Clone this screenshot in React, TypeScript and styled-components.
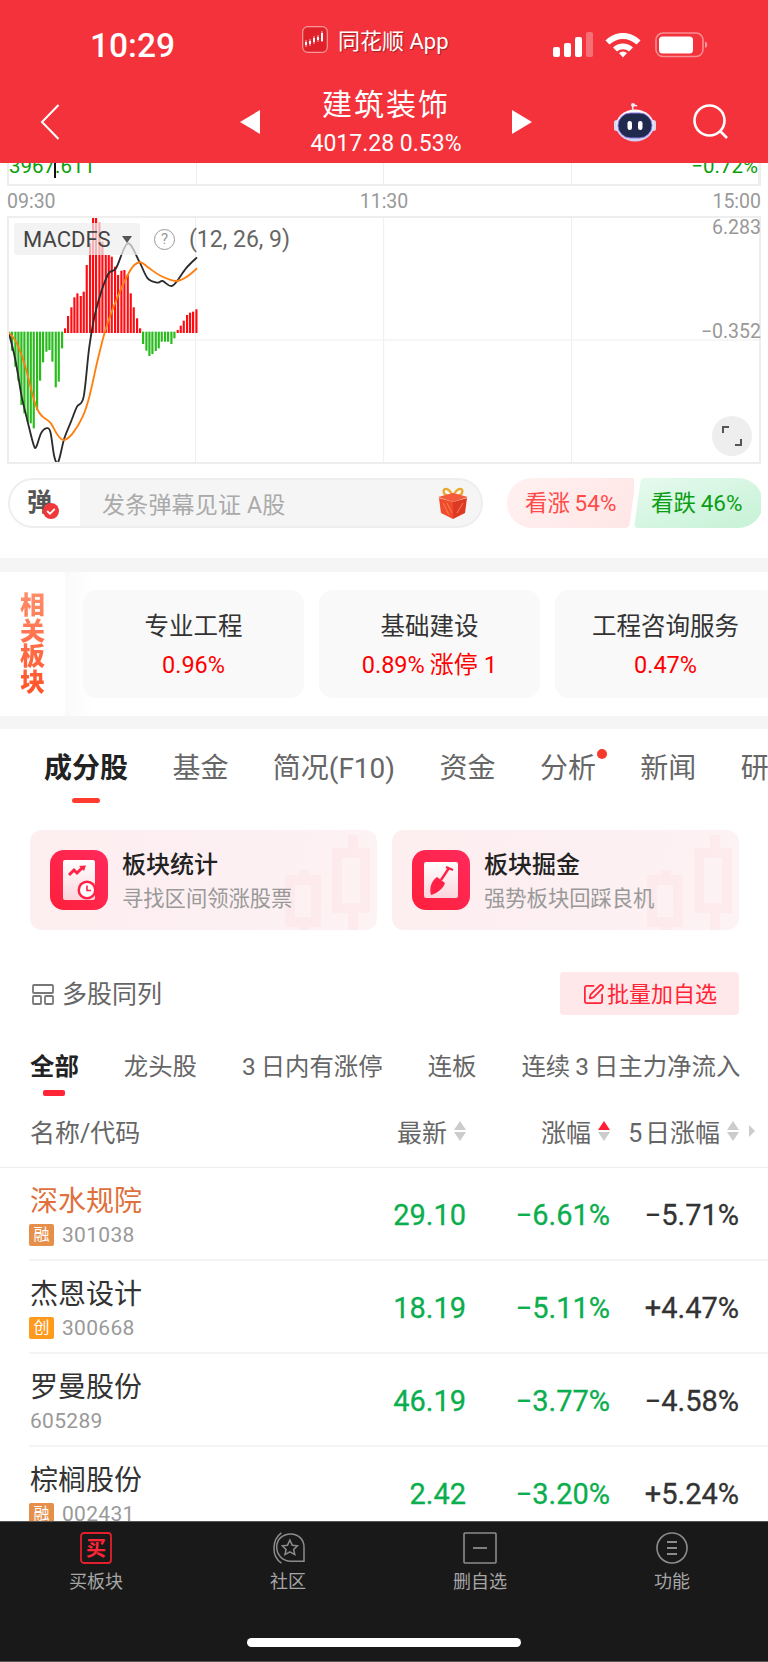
import React from "react";
import styled, { createGlobalStyle } from "styled-components";
import { SquarePen } from "lucide-react";

const FONT = `Roboto, "Noto Sans CJK SC", sans-serif`;

const Global = createGlobalStyle`
  html, body { margin: 0; padding: 0; background: #fff; }
  * { box-sizing: border-box; }
  body { font-family: ${FONT}; }
`;

const Page = styled.div`
  width: 768px; height: 1662px; display: flex; flex-direction: column;
  overflow: hidden; background: #fff; font-family: ${FONT};
`;
const Header = styled.header`
  flex: 0 0 163px; background: #f4323b; color: #fff; padding-top: 24px; position: relative; z-index: 1;
`;
const StatusRow = styled.div`
  height: 38px; display: grid; grid-template-columns: 302px 251px 1fr; align-items: center;
`;
const Time = styled.div`
  padding-left: 90px; font: 500 33.5px/38px Roboto, sans-serif; position: relative; top: 3px;
`;
const CarrierApp = styled.div`
  display: flex; align-items: center; gap: 10px; font-size: 22px; text-shadow: 1px 1px 1px rgba(0,0,0,.35);
  position: relative; top: -4px;
`;
const StatusIcons = styled.div`
  display: flex; align-items: center; position: relative; top: 2px;
`;
const NavRow = styled.div`
  margin-top: 24px; height: 71px; display: flex; align-items: center; padding-left: 40px;
`;
const NavTitle = styled.div`
  width: 252px; text-align: center; display: flex; flex-direction: column; align-items: center; margin-top: 2px;
`;
const Title = styled.div`
  font-size: 30px; line-height: 36px; letter-spacing: 2px; height: 36px;
`;
const SubTitle = styled.div`
  margin-top: 7px; font-size: 23px; line-height: 28px; height: 28px;
`;
const Spacer = styled.div<{ $w: number }>`
  flex: 0 0 ${(p) => p.$w}px;
`;
const Triangle = styled.div<{ $right?: boolean }>`
  width: 0; height: 0; border-top: 12px solid transparent; border-bottom: 12px solid transparent;
  ${(p) => (p.$right ? "border-left: 20px solid #fff;" : "border-right: 20px solid #fff;")}
`;
const Content = styled.main`
  flex: 1 1 0; min-height: 0; overflow: hidden;
`;
const ChartArea = styled.section`
  padding: 0 7px;
`;
const PriceChart = styled.div`
  position: relative; height: 23px; border-left: 2px solid #eee; border-right: 2px solid #eee;
  border-bottom: 2px solid #eee; display: grid; grid-template-columns: repeat(4, 1fr);
  overflow: hidden;
`;
const GridCell = styled.div`
  border-right: 1px solid #eee; &:last-child { border-right: none; }
`;
const PriceTag = styled.div<{ $right?: boolean }>`
  position: absolute; bottom: 8px; color: #0a9f0a; font-size: 20.5px; line-height: 20px;
  ${(p) => (p.$right ? "right: 1px;" : "left: 0;")}
`;
const Cursor = styled.div`
  position: absolute; left: 45px; top: 0; width: 2px; height: 15px; background: #111;
`;
const TimeAxis = styled.div`
  height: 30px; display: flex; justify-content: space-between; align-items: center;
  color: #999; font-size: 19.5px;
`;
const MacdBox = styled.div`
  position: relative; height: 248px; border: 2px solid #eee;
`;
const MacdSvg = styled.svg`
  display: block; width: 750px; height: 244px;
`;
const MacdPill = styled.div`
  position: absolute; left: 5px; top: 5px; width: 126px; height: 32px; background: rgba(238,238,238,.72);
  border-radius: 3px; padding-left: 9px; color: #444; font-size: 22px; line-height: 33px;
`;
const PillCaret = styled.span`
  position: absolute; left: 108px; top: 13px; width: 0; height: 0;
  border-left: 5.5px solid transparent; border-right: 5.5px solid transparent; border-top: 7px solid #555;
`;
const Help = styled.div`
  position: absolute; left: 145px; top: 11px; width: 21px; height: 21px; border: 1.5px solid #999; border-radius: 50%;
  color: #999; font-size: 15px; line-height: 18px; text-align: center;
`;
const Params = styled.div`
  position: absolute; left: 180px; top: 8px; color: #666; font-size: 23px; line-height: 28px; white-space: nowrap;
`;
const AxisValue = styled.div<{ $top: number }>`
  position: absolute; right: -2px; top: ${(p) => p.$top}px; color: #999; font-size: 19.5px; line-height: 20px;
`;
const Expand = styled.div`
  position: absolute; left: 703px; top: 198px; width: 40px; height: 40px; border-radius: 50%;
  background: #eee; display: flex; align-items: center; justify-content: center;
`;
const ActionRow = styled.section`
  padding: 14px 7px 30px 8px; display: flex; justify-content: space-between;
`;
const Danmu = styled.div`
  width: 475px; height: 50px; border: 2px solid #eee; border-radius: 25px; overflow: hidden;
  display: flex; align-items: center; background: #f5f5f5; position: relative;
`;
const DanmuBadge = styled.div`
  flex: 0 0 70px; height: 100%; background: #fff; position: relative; padding: 5px 0 0 17px;
  font-size: 25px; line-height: 36px; font-weight: 700; color: #555;
`;
const BadgeCheck = styled.svg`
  position: absolute; left: 33px; top: 23px; width: 16px; height: 16px;
`;
const DanmuText = styled.div`
  margin-left: 22px; color: #aaa; font-size: 23px; flex: 1; letter-spacing: .2px;
`;
const Gift = styled.svg`
  width: 32px; height: 34px; margin-right: 12px;
`;
const Vote = styled.div`
  display: flex; width: 254px; height: 50px; justify-content: space-between;
`;
const VoteUp = styled.div`
  width: 129px; height: 50px; color: #ff4a4a; font-size: 22.5px; line-height: 50px; padding-left: 18px;
  background: linear-gradient(135deg, #fff1f0, #ffe6e6); white-space: nowrap;
  clip-path: path("M25 0 H125 Q129 0 128.4 4 L122.6 46 Q122 50 118 50 H25 A25 25 0 0 1 25 0 Z");
`;
const VoteDown = styled.div`
  width: 129px; height: 50px; color: #0b9e14; font-size: 22.5px; line-height: 50px; padding-left: 17px;
  background: linear-gradient(160deg, #e6faee, #c6f2d6); white-space: nowrap;
  clip-path: path("M104 0 A25 25 0 0 1 104 50 H4 Q0 50 .6 46 L6.4 4 Q7 0 11 0 Z");
`;
const Band = styled.div<{ $h: number }>`
  height: ${(p) => p.$h}px; background: #f5f5f5;
`;
const SectorRow = styled.section`
  height: 144px; display: flex; overflow: hidden;
  background: linear-gradient(90deg, #fff 65px, #fafafa 65px, #fff 95px);
`;
const SectorLabel = styled.div`
  flex: 0 0 65px; padding: 21px 0 0 20px; font-size: 25px; line-height: 25.5px; font-weight: 900; width: 65px;
  background: linear-gradient(180deg, #ff9a78, #ff4d22); -webkit-background-clip: text; background-clip: text;
  color: transparent; height: 130px;
`;
const SectorCards = styled.div`
  display: flex; gap: 15px; padding: 18px 0 0 18px;
`;
const SectorCard = styled.div`
  flex: 0 0 221px; height: 108px; background: #f9f9f9; border-radius: 14px; text-align: center; padding-top: 19px;
`;
const SectorName = styled.div`
  color: #333; font-size: 24.5px; line-height: 36px; white-space: nowrap;
`;
const SectorPct = styled.div`
  color: #f00; font-size: 23.5px; line-height: 34px; margin-top: 3px; white-space: nowrap;
  span { font-size: 24px; margin-left: 5px; }
`;
const Tabs = styled.nav`
  height: 101px; padding: 24px 0 0 44px; display: flex; gap: 44.4px; white-space: nowrap; overflow: hidden;
`;
const Tab = styled.div<{ $active?: boolean }>`
  position: relative; font-size: 28px; line-height: 32px; height: 32px; flex: none;
  color: ${(p) => (p.$active ? "#222" : "#666")}; font-weight: ${(p) => (p.$active ? 700 : 400)};
  ${(p) => p.$active && `&::after { content: ""; position: absolute; left: 28px; top: 45px; width: 28px; height: 5px; border-radius: 3px; background: #ff3b30; }`}
`;
const Dot = styled.span`
  position: absolute; right: -11px; top: -4px; width: 10px; height: 10px; border-radius: 50%; background: #f6392c;
`;
const Promos = styled.section`
  display: flex; gap: 15px; padding: 0 29px 0 30px;
`;
const Promo = styled.div`
  position: relative; overflow: hidden; flex: 0 0 347px; height: 100px; border-radius: 12px;
  background: linear-gradient(100deg, #fdeef0, #fdf0f2 60%, #fdf2f4);
  display: flex; align-items: center; padding-left: 20px; gap: 14px;
`;
const PromoIcon = styled.svg`
  flex: 0 0 58px; width: 58px; height: 60px;
`;
const PromoWater = styled.svg`
  position: absolute; right: 0; top: 0; width: 120px; height: 100px;
`;
const PromoText = styled.div`
  position: relative; display: flex; flex-direction: column; padding-top: 3px;
`;
const PromoTitle = styled.div`
  font-size: 24px; line-height: 34px; font-weight: 500; color: #222;
`;
const PromoSub = styled.div`
  font-size: 21.3px; line-height: 34px; color: #999;
`;
const ToolRow = styled.section`
  margin-top: 42px; height: 43px; padding: 0 29px 0 32px; display: flex; align-items: center; justify-content: space-between;
`;
const ToolLeft = styled.div`
  display: flex; align-items: center; gap: 8px; color: #666; font-size: 25px; padding-bottom: 3px;
  svg { position: relative; top: 2px; }
`;
const BatchButton = styled.div`
  width: 179px; height: 43px; background: #ffe8e9; border-radius: 4px; color: #ff2436; font-size: 22px;
  display: flex; align-items: center; justify-content: center; gap: 2px; padding-bottom: 3px;
  svg { position: relative; top: 2px; }
`;
const SubTabs = styled.nav`
  height: 81px; padding: 36px 0 0 30px; display: flex; gap: 45px; white-space: nowrap; overflow: hidden;
`;
const SubTab = styled.div<{ $active?: boolean }>`
  position: relative; font-size: 24.4px; line-height: 32px; height: 32px; flex: none;
  color: ${(p) => (p.$active ? "#222" : "#666")}; font-weight: ${(p) => (p.$active ? 700 : 400)};
  ${(p) => p.$active && `&::after { content: ""; position: absolute; left: 13px; top: 39px; width: 22px; height: 6px; border-radius: 2px; background: #ff2436; }`}
`;
const TableHead = styled.div`
  height: 72px; border-bottom: 1px solid #eee; padding: 0 0 1px 30px;
  display: grid; grid-template-columns: 1fr 100px 144px 129px 29px; align-items: center;
  color: #666; font-size: 25px;
`;
const HeadCell = styled.div`
  display: flex; justify-content: flex-end; align-items: center; gap: 6px; white-space: nowrap;
`;
const Sort = styled.span`
  display: inline-flex; flex-direction: column; gap: 2px; width: 13px; align-items: center;
`;
const SortArrow = styled.i<{ $down?: boolean; $on?: boolean }>`
  display: block; width: 0; height: 0; border-left: 6px solid transparent; border-right: 6px solid transparent;
  ${(p) => (p.$down ? "border-top" : "border-bottom")}: 9px solid ${(p) => (p.$on ? "#ff1f35" : "#ccc")};
`;
const MoreCaret = styled.span`
  justify-self: start; margin-left: 10px; width: 0; height: 0;
  border-top: 6px solid transparent; border-bottom: 6px solid transparent; border-left: 6px solid #ccc;
`;
const Row = styled.div`
  height: 93px; margin-left: 29px; border-bottom: 2px solid #f4f4f4; padding-left: 1px;
  display: grid; grid-template-columns: 1fr 100px 144px 129px 29px; align-items: center;
`;
const NameCell = styled.div`
  align-self: start; padding-top: 17px; margin-left: -1px;
`;
const StockName = styled.div<{ $hot?: boolean }>`
  font-size: 28px; line-height: 34px; color: ${(p) => (p.$hot ? "#e0703c" : "#333")};
  margin-left: 1px;
`;
const CodeLine = styled.div`
  margin-top: 4px; height: 24px; display: flex; align-items: center; gap: 8px; color: #999; font-size: 21px;
  letter-spacing: .3px; padding-left: 0;
`;
const Mark = styled.span<{ $c: string }>`
  width: 25px; height: 22px; background: ${(p) => p.$c}; color: #fff; border-radius: 2px; font-size: 16px;
  line-height: 22px; text-align: center; letter-spacing: 0;
`;
const Plain = styled.span`
  margin-left: 1px;
`;
const Num = styled.div<{ $c: string }>`
  text-align: right; font-size: 29px; font-weight: 400; -webkit-text-stroke: .3px ${(p) => p.$c};
  line-height: 34px; color: ${(p) => p.$c}; white-space: nowrap; position: relative; top: 1px;
`;
const TabBar = styled.footer`
  flex: 0 0 141px; background: #191919; border-top: 1px solid #555; border-bottom: 1px solid #555;
  display: flex; flex-direction: column; align-items: center;
`;
const TabItems = styled.div`
  display: grid; grid-template-columns: repeat(4, 192px); width: 768px; padding-top: 10px;
`;
const TabItem = styled.div<{ $on?: boolean }>`
  display: flex; flex-direction: column; align-items: center; color: #a6a6a6; font-size: 18px; line-height: 24px;
  svg { display: block; margin-bottom: 6px; }
`;
const HomeBar = styled.div`
  margin-top: auto; margin-bottom: 14px; width: 274px; height: 9px; border-radius: 5px; background: #fff;
`;

const green = "#0bae4e";
const dark = "#333";

const bars: [number, number][] = [
  [24,400],[33,452],[43,500],[52,542],[61,615],[70,640],[80,665],[89,670],[98,685],[108,630],[117,542],[126,487],[136,455],[145,450],[154,485],[164,562],[173,545],[183,445],
  [192,385],[201,348],[211,322],[220,292],[229,280],[239,288],[248,275],[257,195],[267,130],[276,52],[285,52],[295,68],[304,125],[314,165],[323,165],[332,170],[342,200],[351,225],[361,212],[370,210],[380,225],[389,280],[398,322],[408,355],[417,385],
  [426,432],[436,452],[445,468],[454,462],[464,453],[473,445],[482,425],[492,425],[501,425],[511,432],[520,415],
  [530,390],[539,377],[548,362],[558,345],[567,338],[576,335],[586,328],
];
const blackLine = [[24,400],[40,465],[52,530],[62,590],[80,665],[98,735],[106,740],[120,700],[135,685],[148,695],[160,770],[172,785],[190,715],[210,665],[228,620],[248,590],[265,440],[285,330],[320,225],[345,205],[380,130],[415,185],[440,235],[470,248],[485,243],[515,257],[555,205],[588,172]];
const orangeLine = [[24,398],[45,425],[70,490],[95,585],[110,630],[125,650],[148,668],[170,705],[188,720],[215,700],[245,650],[265,590],[290,480],[315,385],[350,290],[380,225],[400,195],[420,187],[445,205],[480,228],[525,243],[555,232],[588,205]];

function smooth(pts: number[][]) {
  let d = `M${pts[0][0]} ${pts[0][1]}`;
  for (let i = 0; i < pts.length - 1; i++) {
    const p0 = pts[Math.max(i - 1, 0)], p1 = pts[i], p2 = pts[i + 1], p3 = pts[Math.min(i + 2, pts.length - 1)];
    d += ` C${p1[0] + (p2[0] - p0[0]) / 6} ${p1[1] + (p2[1] - p0[1]) / 6} ${p2[0] - (p3[0] - p1[0]) / 6} ${p2[1] - (p3[1] - p1[1]) / 6} ${p2[0]} ${p2[1]}`;
  }
  return d;
}

const MacdChart = () => (
  <MacdSvg viewBox="24 54 2250 732">
    <line x1="584" y1="54" x2="584" y2="786" stroke="#eee" strokeWidth="3" />
    <line x1="1148" y1="54" x2="1148" y2="786" stroke="#eee" strokeWidth="3" />
    <line x1="1712" y1="54" x2="1712" y2="786" stroke="#eee" strokeWidth="3" />
    <line x1="24" y1="420" x2="2274" y2="420" stroke="#eee" strokeWidth="3" />
    {bars.map(([x, y]) =>
      y < 397 ? (
        <rect key={x} x={x - 3} y={y} width="6.5" height={399 - y} fill="#ff0c12" />
      ) : (
        <rect key={x} x={x - 3} y="395" width="6.5" height={y - 395} fill="#27bb1c" />
      ),
    )}
    <path d={smooth(blackLine)} fill="none" stroke="#2b2b2b" strokeWidth="5.5" />
    <path d={smooth(orangeLine)} fill="none" stroke="#ff7f0e" strokeWidth="5.5" />
  </MacdSvg>
);

const Logo = () => (
  <svg width="26" height="27" viewBox="0 0 26 27">
    <rect x=".7" y=".7" width="24.6" height="25.6" rx="5" fill="#e0202a" stroke="#f59a9a" strokeWidth="1.2" />
    <path d="M3 16h2v3H3zM7 15h2v3H7zM11 12h2v4h-2zM15 11h2v3h-2zM19 7h2v8h-2z" fill="#fff" />
    <path d="M4 14v7M8 13v7M12 10v8M16 9v7M20 5v11" stroke="#fff" strokeWidth=".7" />
  </svg>
);
const Signal = () => (
  <svg width="40" height="26" viewBox="0 0 40 26">
    <rect x="0" y="15" width="7" height="10" rx="2" fill="#fff" />
    <rect x="11" y="11" width="7" height="14" rx="2" fill="#fff" />
    <rect x="22" y="5" width="7" height="20" rx="2" fill="#fff" />
    <rect x="33" y="0" width="7" height="25" rx="2" fill="#fff" opacity=".3" />
  </svg>
);
const Wifi = () => (
  <svg width="36" height="26" viewBox="0 0 36 26" style={{ marginLeft: 12 }}>
    <path d="M0.5 8.5 C10 -1.5 26 -1.5 35.5 8.5 L31.5 12.5 C24 5 12 5 4.5 12.5 Z" fill="#fff" />
    <path d="M8 15.5 C13.5 10 22.5 10 28 15.5 L24 19.5 C20.5 16.5 15.5 16.5 12 19.5 Z" fill="#fff" />
    <path d="M14 21 C16.5 19 19.5 19 22 21 L18 25.5 Z" fill="#fff" />
  </svg>
);
const Battery = () => (
  <svg width="54" height="26" viewBox="0 0 54 26" style={{ marginLeft: 14 }}>
    <rect x="1" y="1" width="47" height="23.5" rx="7" fill="none" stroke="#fff" strokeOpacity=".45" strokeWidth="1.6" />
    <rect x="4" y="4.5" width="34" height="17" rx="3.5" fill="#fff" />
    <path d="M50 9.5 C53 10.5 53 15 50 16 Z" fill="#fff" opacity=".5" />
  </svg>
);
const Robot = () => (
  <svg width="44" height="40" viewBox="0 0 44 40">
    <defs>
      <linearGradient id="rb" x1="0" y1="0" x2="0" y2="1"><stop offset="0" stopColor="#fff" /><stop offset="1" stopColor="#cfd0f0" /></linearGradient>
    </defs>
    <path d="M20 8 C19 4 20 2 24 4" fill="none" stroke="#e9e6f2" strokeWidth="1.5" />
    <circle cx="20" cy="3" r="2" fill="#f1eef7" />
    <rect x="1" y="18" width="5" height="11" rx="2.5" fill="#d8d8ee" />
    <rect x="38" y="18" width="5" height="11" rx="2.5" fill="#d8d8ee" />
    <ellipse cx="22" cy="23.5" rx="19" ry="16" fill="url(#rb)" />
    <rect x="5" y="11" width="34" height="25" rx="12.5" fill="#1f2a4d" stroke="#8d78e8" strokeWidth="1" />
    <rect x="14.5" y="19" width="4.5" height="9" rx="2.2" fill="#fff" />
    <rect x="25" y="19" width="4.5" height="9" rx="2.2" fill="#fff" />
  </svg>
);
const GiftIcon = () => (
  <Gift viewBox="0 0 32 34">
    <path d="M16 10 C11 0 5 2 7 7 C8 10 13 10 16 10 C19 10 24 10 25 7 C27 2 21 0 16 10 Z" fill="none" stroke="#e8a92e" strokeWidth="2.4" />
    <path d="M1 11 L16 7 L31 11 L16 16 Z" fill="#f55a3c" />
    <path d="M2 12 L16 16 L16 33 L4 27 Z" fill="#f04b2a" />
    <path d="M30 12 L16 16 L16 33 L28 27 Z" fill="#dc3a22" />
    <path d="M6 17 L12 29 M10 17 L15 27 M20 27 L26 17" stroke="#f77f5a" strokeWidth="1" />
  </Gift>
);
const Water = () => (
  <PromoWater viewBox="0 0 120 100">
    <g fill="none" stroke="#fbdfe3" strokeWidth="10" opacity=".38">
      <path d="M96 5 V23 M96 78 V100" />
      <rect x="80" y="23" width="28" height="55" />
      <path d="M47 40 V50 M47 92 V100" />
      <rect x="33" y="50" width="26" height="42" />
    </g>
  </PromoWater>
);
const IconDefs = ({ id }: { id: string }) => (
  <defs>
    <linearGradient id={id + "a"} x1="1" y1="0" x2="0" y2="1"><stop offset="0" stopColor="#ff2a5c" /><stop offset="1" stopColor="#ff1f3a" /></linearGradient>
    <linearGradient id={id + "b"} x1="0" y1="0" x2="0" y2="1"><stop offset="0" stopColor="#fff" /><stop offset="1" stopColor="#fbd5dc" /></linearGradient>
  </defs>
);
const StatIcon = () => (
  <PromoIcon viewBox="0 0 58 60">
    <IconDefs id="s" />
    <rect width="58" height="60" rx="14" fill="url(#sa)" />
    <rect x="13" y="10" width="32" height="40" rx="2" fill="url(#sb)" />
    <path d="M19 25 L24 20 L27 23 L32 18" fill="none" stroke="#ff2246" strokeWidth="3" />
    <path d="M29 16 L36 15.5 L34 21 Z" fill="#ff2246" />
    <circle cx="37" cy="40" r="9.5" fill="#ff2246" />
    <circle cx="37" cy="40" r="7" fill="#fff" />
    <path d="M37 35.5 V40.5 H41" fill="none" stroke="#ff2246" strokeWidth="1.6" />
  </PromoIcon>
);
const DigIcon = () => (
  <PromoIcon viewBox="0 0 58 60">
    <IconDefs id="d" />
    <rect width="58" height="60" rx="14" fill="url(#da)" />
    <rect x="12" y="12" width="34" height="36" rx="2" fill="url(#db)" />
    <path d="M37 18 L29 30" stroke="#ff2246" strokeWidth="2.4" />
    <path d="M34 17 L41 20" stroke="#ff2246" strokeWidth="2.4" />
    <path d="M25 27 L33 33 C31 39 25 43 19 45 C17 39 19 31 25 27 Z" fill="#ff2246" />
  </PromoIcon>
);
const GridIcon = () => (
  <svg width="22" height="21" viewBox="0 0 22 21">
    <g fill="none" stroke="#777" strokeWidth="1.8">
      <rect x="1" y="1" width="20" height="8" rx="1" />
      <rect x="1" y="12" width="8" height="8" rx="1" />
      <rect x="13" y="12" width="8" height="8" rx="1" />
    </g>
  </svg>
);
const BuyIcon = () => (
  <svg width="32" height="32" viewBox="0 0 32 32">
    <rect x="1" y="1" width="30" height="30" rx="3" fill="none" stroke="#e2202c" strokeWidth="1.8" />
    <text x="16" y="24" textAnchor="middle" fontSize="20" fontWeight="700" fill="#ff2436" fontFamily='"Noto Sans CJK SC", sans-serif'>买</text>
  </svg>
);
const CommunityIcon = () => (
  <svg width="38" height="32" viewBox="0 0 38 34">
    <g fill="none" stroke="#8c8c8c" strokeWidth="1.6">
      <path d="M12 1 C2 8 1 26 12 33" />
      <path d="M22 2 C30 2 36 8 36 16 V31 H22 C13 31 7 24 7 16 C7 8 13 2 22 2 Z" />
      <path d="M21 8.5 L23.5 14 L29 14.6 L25 18.5 L26.2 24 L21 21.2 L15.8 24 L17 18.5 L13 14.6 L18.5 14 Z" />
    </g>
  </svg>
);
const DeleteIcon = () => (
  <svg width="34" height="32" viewBox="0 0 34 32">
    <rect x="1" y="1" width="32" height="30" rx="1" fill="none" stroke="#8c8c8c" strokeWidth="1.6" />
    <path d="M10 16 H24" stroke="#8c8c8c" strokeWidth="1.8" />
  </svg>
);
const MoreIcon = () => (
  <svg width="32" height="32" viewBox="0 0 32 32">
    <circle cx="16" cy="16" r="15" fill="none" stroke="#8c8c8c" strokeWidth="1.6" />
    <path d="M11 10 H21 M11 16 H21 M11 22 H21" stroke="#8c8c8c" strokeWidth="2" />
  </svg>
);

const stocks = [
  { name: "深水规院", hot: true, mark: "融", c: "#e58f4b", code: "301038", p: "29.10", g: "−6.61%", f: "−5.71%" },
  { name: "杰恩设计", mark: "创", c: "#ff9a1f", code: "300668", p: "18.19", g: "−5.11%", f: "+4.47%" },
  { name: "罗曼股份", code: "605289", p: "46.19", g: "−3.77%", f: "−4.58%" },
  { name: "棕榈股份", mark: "融", c: "#e58f4b", code: "002431", p: "2.42", g: "−3.20%", f: "+5.24%" },
];

export default function App() {
  return (
    <Page>
      <Global />
      <Header>
        <StatusRow>
          <Time>10:29</Time>
          <CarrierApp><Logo />同花顺 App</CarrierApp>
          <StatusIcons><Signal /><Wifi /><Battery /></StatusIcons>
        </StatusRow>
        <NavRow>
          <svg width="20" height="36" viewBox="0 0 20 36"><path d="M18.5 1 L2 18 L18.5 35" fill="none" stroke="#fff" strokeWidth="2" /></svg>
          <Spacer $w={180} />
          <Triangle />
          <NavTitle>
            <Title>建筑装饰</Title>
            <SubTitle>4017.28 0.53%</SubTitle>
          </NavTitle>
          <Triangle $right />
          <Spacer $w={81} />
          <Robot />
          <Spacer $w={36} />
          <svg width="36" height="36" viewBox="0 0 36 36"><circle cx="16.5" cy="16.5" r="15" fill="none" stroke="#fff" strokeWidth="2.6" /><path d="M27 27 L34 34" stroke="#fff" strokeWidth="2.6" /></svg>
        </NavRow>
      </Header>
      <Content>
        <ChartArea>
          <PriceChart>
            <GridCell /><GridCell /><GridCell /><GridCell />
            <PriceTag>3967.611</PriceTag>
            <PriceTag $right>−0.72%</PriceTag>
            <Cursor />
          </PriceChart>
          <TimeAxis><span>09:30</span><span>11:30</span><span>15:00</span></TimeAxis>
          <MacdBox>
            <MacdChart />
            <MacdPill>MACDFS<PillCaret /></MacdPill>
            <Help>?</Help>
            <Params>(12, 26, 9)</Params>
            <AxisValue $top={0}>6.283</AxisValue>
            <AxisValue $top={104}>−0.352</AxisValue>
            <Expand>
              <svg width="20" height="20" viewBox="0 0 20 20"><path d="M1 7 V1 H7 M13 19 H19 V13" fill="none" stroke="#555" strokeWidth="2" /></svg>
            </Expand>
          </MacdBox>
        </ChartArea>
        <ActionRow>
          <Danmu>
            <DanmuBadge>
              弹
              <BadgeCheck viewBox="0 0 16 16"><circle cx="8" cy="8" r="8" fill="#f0383a" /><path d="M4.2 8 L7 10.8 L11.8 5.8" fill="none" stroke="#fff" strokeWidth="1.8" /></BadgeCheck>
            </DanmuBadge>
            <DanmuText>发条弹幕见证 A股</DanmuText>
            <GiftIcon />
          </Danmu>
          <Vote>
            <VoteUp>看涨{"\u2009"}54%</VoteUp>
            <VoteDown>看跌{"\u2009"}46%</VoteDown>
          </Vote>
        </ActionRow>
        <Band $h={14} />
        <SectorRow>
          <SectorLabel>相关板块</SectorLabel>
          <SectorCards>
            <SectorCard><SectorName>专业工程</SectorName><SectorPct>0.96%</SectorPct></SectorCard>
            <SectorCard><SectorName>基础建设</SectorName><SectorPct>0.89%<span>涨停 1</span></SectorPct></SectorCard>
            <SectorCard><SectorName>工程咨询服务</SectorName><SectorPct>0.47%</SectorPct></SectorCard>
          </SectorCards>
        </SectorRow>
        <Band $h={13} />
        <Tabs>
          <Tab $active>成分股</Tab>
          <Tab>基金</Tab>
          <Tab>简况(F10)</Tab>
          <Tab>资金</Tab>
          <Tab>分析<Dot /></Tab>
          <Tab>新闻</Tab>
          <Tab>研</Tab>
        </Tabs>
        <Promos>
          <Promo>
            <Water />
            <StatIcon />
            <PromoText><PromoTitle>板块统计</PromoTitle><PromoSub>寻找区间领涨股票</PromoSub></PromoText>
          </Promo>
          <Promo>
            <Water />
            <DigIcon />
            <PromoText><PromoTitle>板块掘金</PromoTitle><PromoSub>强势板块回踩良机</PromoSub></PromoText>
          </Promo>
        </Promos>
        <ToolRow>
          <ToolLeft><GridIcon />多股同列</ToolLeft>
          <BatchButton><SquarePen size={23} strokeWidth={1.8} />批量加自选</BatchButton>
        </ToolRow>
        <SubTabs>
          <SubTab $active>全部</SubTab>
          <SubTab>龙头股</SubTab>
          <SubTab>3{"\u2009"}日内有涨停</SubTab>
          <SubTab>连板</SubTab>
          <SubTab>连续{"\u2009"}3{"\u2009"}日主力净流入</SubTab>
        </SubTabs>
        <TableHead>
          <div>名称/代码</div>
          <HeadCell>最新<Sort><SortArrow /><SortArrow $down /></Sort></HeadCell>
          <HeadCell>涨幅<Sort><SortArrow $on /><SortArrow $down /></Sort></HeadCell>
          <HeadCell>5{"\u200a"}日涨幅<Sort><SortArrow /><SortArrow $down /></Sort></HeadCell>
          <MoreCaret />
        </TableHead>
        {stocks.map((s) => (
          <Row key={s.code}>
            <NameCell>
              <StockName $hot={s.hot}>{s.name}</StockName>
              <CodeLine>
                {s.mark ? <Mark $c={s.c!}>{s.mark}</Mark> : null}
                {s.mark ? s.code : <Plain>{s.code}</Plain>}
              </CodeLine>
            </NameCell>
            <Num $c={green}>{s.p}</Num>
            <Num $c={green}>{s.g}</Num>
            <Num $c={dark}>{s.f}</Num>
          </Row>
        ))}
      </Content>
      <TabBar>
        <TabItems>
          <TabItem><BuyIcon />买板块</TabItem>
          <TabItem><CommunityIcon />社区</TabItem>
          <TabItem><DeleteIcon />删自选</TabItem>
          <TabItem><MoreIcon />功能</TabItem>
        </TabItems>
        <HomeBar />
      </TabBar>
    </Page>
  );
}
